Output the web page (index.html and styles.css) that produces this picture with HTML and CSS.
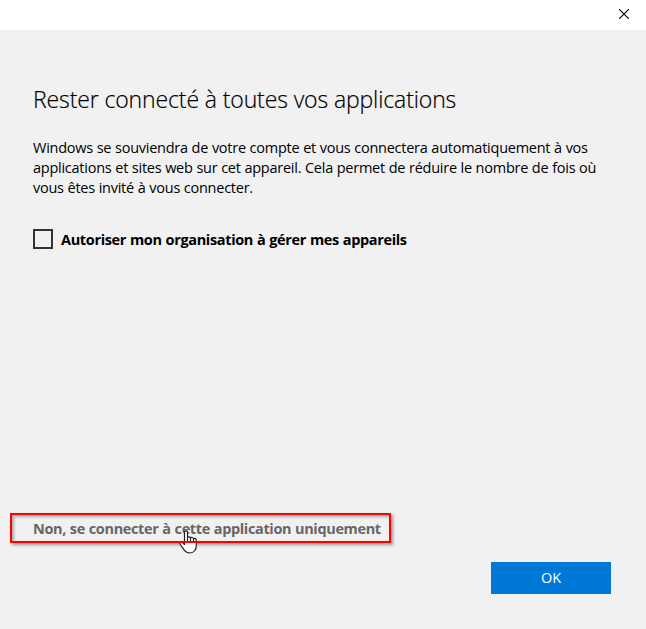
FILE: index.html
```html
<!DOCTYPE html>
<html lang="fr">
<head>
<meta charset="utf-8">
<title>Rester connecté</title>
<link rel="stylesheet" href="styles.css">
</head>
<body>
<div class="dialog">
  <header class="titlebar">
    <button class="close" aria-label="Fermer">
      <svg width="10" height="10" viewBox="0 0 10 10"><path d="M0 0L10 10M10 0L0 10" stroke="#000" stroke-width="1.15"/></svg>
    </button>
  </header>
  <main class="content">
    <h1 class="title">Rester connecté à toutes vos applications</h1>
    <p class="text"><span class="line">Windows se souviendra de votre compte et vous connectera automatiquement à vos</span><span class="line">applications et sites web sur cet appareil. Cela permet de réduire le nombre de fois où</span><span class="line">vous êtes invité à vous connecter.</span></p>
    <div class="option"><span class="checkbox"></span><span class="option-label">Autoriser mon organisation à gérer mes appareils</span></div>
    <div class="app-only">
      <a class="link">Non, se connecter à cette application uniquement</a>
      <svg class="cursor" width="19" height="24" viewBox="0 0 19 24"><path d="M5.5 15V2.2C5.5 .3 8.5 .3 8.5 2.2V7.5C9 6.4 11.3 6.7 11.5 8C12.3 7 14.3 7.3 14.5 8.8C15.5 8 17.3 8.6 17.3 10.2V15.5C17.3 19.5 15 23 11 23C7.7 23 6 21.5 4.5 19.2L1.2 14.3C.2 12.6 2.2 11.2 3.5 12.5L5.5 14.7M8.5 7.5V12M11.5 8V12M14.5 9V12.5" fill="#fff" stroke="#20202c" stroke-width="1.2"/><path d="M0 12H19" class="cursor-line"/></svg>
    </div>
    <footer class="actions"><button class="ok">OK</button></footer>
  </main>
</div>
</body>
</html>
```
FILE: styles.css
```css
* { box-sizing: border-box; }
body { margin: 0; font-family: "Open Sans", "Noto Sans", sans-serif; color: #000; }
button { border: 0; padding: 0; font-family: inherit; }
.dialog { width: 646px; height: 629px; display: flex; flex-direction: column; background: #f1f1f1; overflow: hidden; }
.titlebar { height: 30px; background: #fff; display: flex; justify-content: flex-end; }
.close { width: 44px; height: 28px; background: none; display: flex; align-items: center; justify-content: center; }
.close svg { display: block; }
.content { flex: 1; display: flex; flex-direction: column; padding: 53px 35px 35px 33px; white-space: nowrap; }
.title { margin: 0; font-size: 23px; font-weight: 300; line-height: 32px; letter-spacing: -0.12px; -webkit-text-stroke: 0.2px #000; }
.text { margin: 23px 0 0; font-size: 14.5px; line-height: 20px; letter-spacing: -0.25px; word-spacing: 0.25px; }
.line { display: block; }
.option { display: flex; align-items: center; margin-top: 31px; height: 20px; }
.checkbox { width: 20px; height: 20px; border: 2px solid #333; margin-right: 8px; }
.option-label { font-size: 14.5px; font-weight: 700; letter-spacing: -0.35px; word-spacing: 0.5px; }
.app-only { position: relative; width: 381px; height: 30px; margin: auto 0 19px -23px; padding-left: 21px; border: 2px solid #f00; box-shadow: 2px 2px 3px #999, inset 2px 2px 3px #aaa; display: flex; align-items: center; }
.link { color: #666; font-size: 14.5px; font-weight: 700; letter-spacing: -0.37px; word-spacing: 0.5px; }
.cursor { position: absolute; left: 167px; top: 15px; }
.cursor-line { stroke: #f00; stroke-width: 2; }
.actions { display: flex; justify-content: flex-end; }
.ok { width: 120px; height: 32px; padding-bottom: 2px; background: #0078d7; color: #fff; font-size: 14.5px; letter-spacing: -0.2px; }
```
